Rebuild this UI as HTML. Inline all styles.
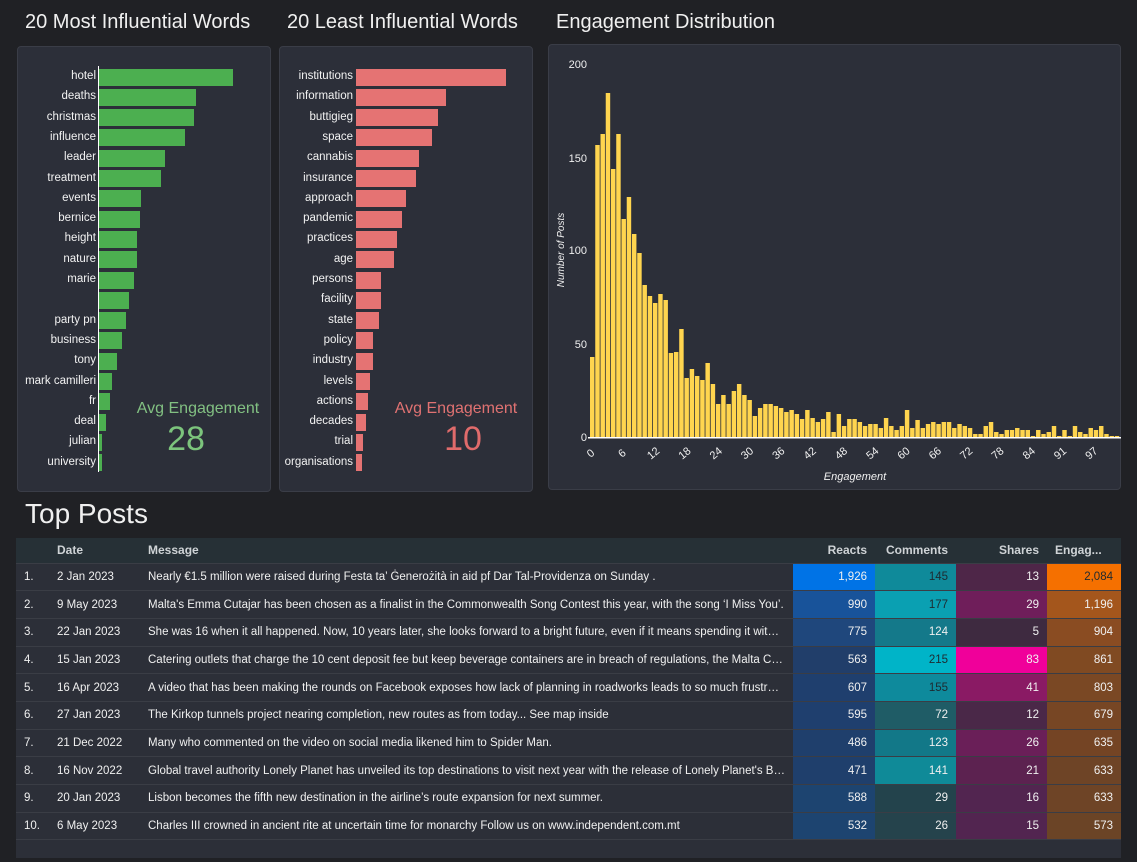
<!DOCTYPE html>
<html><head><meta charset="utf-8">
<style>
*{margin:0;padding:0;box-sizing:border-box}
body{width:1137px;height:862px;background:#202125;font-family:"Liberation Sans",sans-serif;color:#e8e8e8;position:relative;overflow:hidden}
.t{position:absolute;font-size:20px;color:#f0f0f0}
.panel{position:absolute;background:#2c2f39;border:1px solid #3a3d47;border-radius:4px}
.lbl{position:absolute;font-size:11.5px;color:#f2f2f2;text-align:right;width:90px}
.bar{position:absolute;height:17px}
.avg{position:absolute;font-size:16px;text-align:center;width:140px}
.num{position:absolute;font-size:34px;text-align:center;width:140px}
table{position:absolute;left:16px;top:538px;width:1105px;border-collapse:collapse;font-size:11.5px;table-layout:fixed}
th{background:#263036;color:#cfd3d6;font-weight:bold;height:25px;text-align:left;padding:0 8px;font-size:12px}
td{height:27.7px;padding:0 8px;border-top:1.5px solid #3a3d45;background:#2c2f38;white-space:nowrap;overflow:hidden;text-overflow:ellipsis;color:#f0f0f0}
td.n{text-align:right}
.d{color:#1e2a30!important}
</style></head><body>
<div class="t" style="left:25px;top:11px">20 Most Influential Words</div>
<div class="t" style="left:287px;top:11px">20 Least Influential Words</div>
<div class="t" style="left:556px;top:11px">Engagement Distribution</div>
<div class="panel" style="left:17px;top:46px;width:254px;height:446px"></div>
<div class="panel" style="left:279px;top:46px;width:254px;height:446px"></div>
<div class="panel" style="left:548px;top:44px;width:573px;height:446px"></div>
<div style="position:absolute;left:98px;top:66px;width:1px;height:406px;background:#fff"></div>
<div id="g"></div>
<div class="avg" style="left:128px;top:400px;color:#82c082">Avg Engagement</div>
<div class="num" style="left:116px;top:420px;color:#7cc47c">28</div>
<div class="avg" style="left:386px;top:400px;color:#e07272">Avg Engagement</div>
<div class="num" style="left:393px;top:420px;color:#e06b6b">10</div>
<svg style="position:absolute;left:0;top:0" width="1137" height="500" id="h" font-family="Liberation Sans" font-size="11" fill="#f0f0f0">
<text x="587" y="68" text-anchor="end">200</text>
<text x="587" y="162" text-anchor="end">150</text>
<text x="587" y="254" text-anchor="end">100</text>
<text x="587" y="348" text-anchor="end">50</text>
<text x="587" y="441" text-anchor="end">0</text>
<text transform="translate(564,250) rotate(-90)" text-anchor="middle" font-style="italic" font-size="10">Number of Posts</text>
<text x="855" y="480" text-anchor="middle" font-style="italic" font-size="11">Engagement</text>
</svg>
<div class="t" style="left:25px;top:498px;font-size:28px">Top Posts</div>
<table>
<colgroup><col style="width:33px"><col style="width:91px"><col style="width:653px"><col style="width:82px"><col style="width:81px"><col style="width:91px"><col style="width:74px"></colgroup>
<tr><th></th><th>Date</th><th>Message</th><th style="text-align:right">Reacts</th><th style="text-align:right">Comments</th><th style="text-align:right">Shares</th><th>Engag...</th></tr>
<tbody id="tb"></tbody>
<tr><td colspan="7" style="height:18px"></td></tr>
</table>
<script>
var G=[["hotel",233],["deaths",196],["christmas",194],["influence",185],["leader",165],["treatment",161],["events",141],["bernice",140],["height",137],["nature",137],["marie",134],["",129],["party pn",126],["business",122],["tony",117],["mark camilleri",112],["fr",110],["deal",106],["julian",102],["university",102]];
var R=[["institutions",506],["information",446],["buttigieg",438],["space",432],["cannabis",419],["insurance",416],["approach",406],["pandemic",402],["practices",397],["age",394],["persons",381],["facility",381],["state",379],["policy",373],["industry",373],["levels",370],["actions",368],["decades",366],["trial",363],["organisations",362]];
var s="";
G.forEach(function(r,i){var y=77+i*20.3;s+='<div class="lbl" style="left:6px;top:'+(y-7)+'px">'+r[0]+'</div><div class="bar" style="background:#4caf50;left:99px;width:'+(r[1]-99)+'px;top:'+(y-8.5)+'px"></div>';});
R.forEach(function(r,i){var y=77+i*20.3;s+='<div class="lbl" style="left:263px;top:'+(y-7)+'px">'+r[0]+'</div><div class="bar" style="background:#e57373;left:356px;width:'+(r[1]-356)+'px;top:'+(y-8.5)+'px"></div>';});
document.getElementById("g").innerHTML=s;
var H=[357,145,134,93,169,134,219,197,234,253,285,296,303,294,300,353,352,329,378,369,376,380,363,384,404,395,404,391,384,395,400,416,408,404,404,406,408,412,410,414,419,410,418,422,419,412,432,414,426,419,419,422,426,424,424,428,418,426,430,426,410,428,420,428,424,422,424,422,422,428,424,426,428,434,434,426,422,432,434,430,430,428,430,430,436,430,434,432,426,436,430,436,426,432,434,428,430,426,434,436,436];
var w=530/H.length,h="";
H.forEach(function(t,i){h+='<rect x="'+(590+i*w)+'" y="'+t+'" width="'+(w-0.8)+'" height="'+(437-t)+'" fill="#ffd54f"/>';});
h+='<rect x="588" y="437" width="533" height="1.5" fill="#fff"/>';
var L=["0","6","12","18","24","30","36","42","48","54","60","66","72","78","84","91","97"];
L.forEach(function(l,i){var x=593+i*31.3;h+='<text transform="translate('+x+',456) rotate(-40)" text-anchor="middle">'+l+'</text>';});
document.getElementById("h").insertAdjacentHTML("beforeend",h);
var D=[["2 Jan 2023","Nearly €1.5 million were raised during Festa ta’ Ġenerożità in aid pf Dar Tal-Providenza on Sunday .","1,926","145","13","2,084",["#0073e6","#0f8a9a","#4e2648","#f57000"],[0,1,0,1]],
["9 May 2023","Malta's Emma Cutajar has been chosen as a finalist in the Commonwealth Song Contest this year, with the song ‘I Miss You’.","990","177","29","1,196",["#18539a","#0aa0b2","#6f1e5a","#a4561c"],[0,1,0,0]],
["22 Jan 2023","She was 16 when it all happened. Now, 10 years later, she looks forward to a bright future, even if it means spending it with her dog","775","124","5","904",["#1f477c","#14798a","#3e2a40","#8a4c22"],[0,0,0,0]],
["15 Jan 2023","Catering outlets that charge the 10 cent deposit fee but keep beverage containers are in breach of regulations, the Malta Competition","563","215","83","861",["#213e6a","#00b4c8","#f0009a","#804a22"],[0,1,0,0]],
["16 Apr 2023","A video that has been making the rounds on Facebook exposes how lack of planning in roadworks leads to so much frustration","607","155","41","803",["#1f3f6e","#0e8a9c","#8a1a64","#7a4824"],[0,1,0,0]],
["27 Jan 2023","The Kirkop tunnels project nearing completion, new routes as from today... See map inside","595","72","12","679",["#1f3f6e","#1f5c66","#4a2848","#774624"],[0,0,0,0]],
["21 Dec 2022","Many who commented on the video on social media likened him to Spider Man.","486","123","26","635",["#1f3f6c","#127888","#6a1f58","#744424"],[0,0,0,0]],
["16 Nov 2022","Global travel authority Lonely Planet has unveiled its top destinations to visit next year with the release of Lonely Planet's Best in Travel","471","141","21","633",["#1f3f6c","#0f8a98","#5c2250","#6e4426"],[0,0,0,0]],
["20 Jan 2023","Lisbon becomes the fifth new destination in the airline’s route expansion for next summer.","588","29","16","633",["#1d4470","#23434c","#522550","#6e4426"],[0,0,0,0]],
["6 May 2023","Charles III crowned in ancient rite at uncertain time for monarchy Follow us on www.independent.com.mt","532","26","15","573",["#1d4470","#25434c","#522550","#6b4426"],[0,0,0,0]]];
var tb="";
D.forEach(function(r,i){tb+='<tr><td>'+(i+1)+'.</td><td>'+r[0]+'</td><td>'+r[1]+'</td>';for(var k=0;k<4;k++){tb+='<td class="n'+(r[7][k]?' d':'')+'" style="background:'+r[6][k]+'">'+r[2+k]+'</td>';}tb+='</tr>';});
document.getElementById("tb").innerHTML=tb;
</script>
</body></html>
